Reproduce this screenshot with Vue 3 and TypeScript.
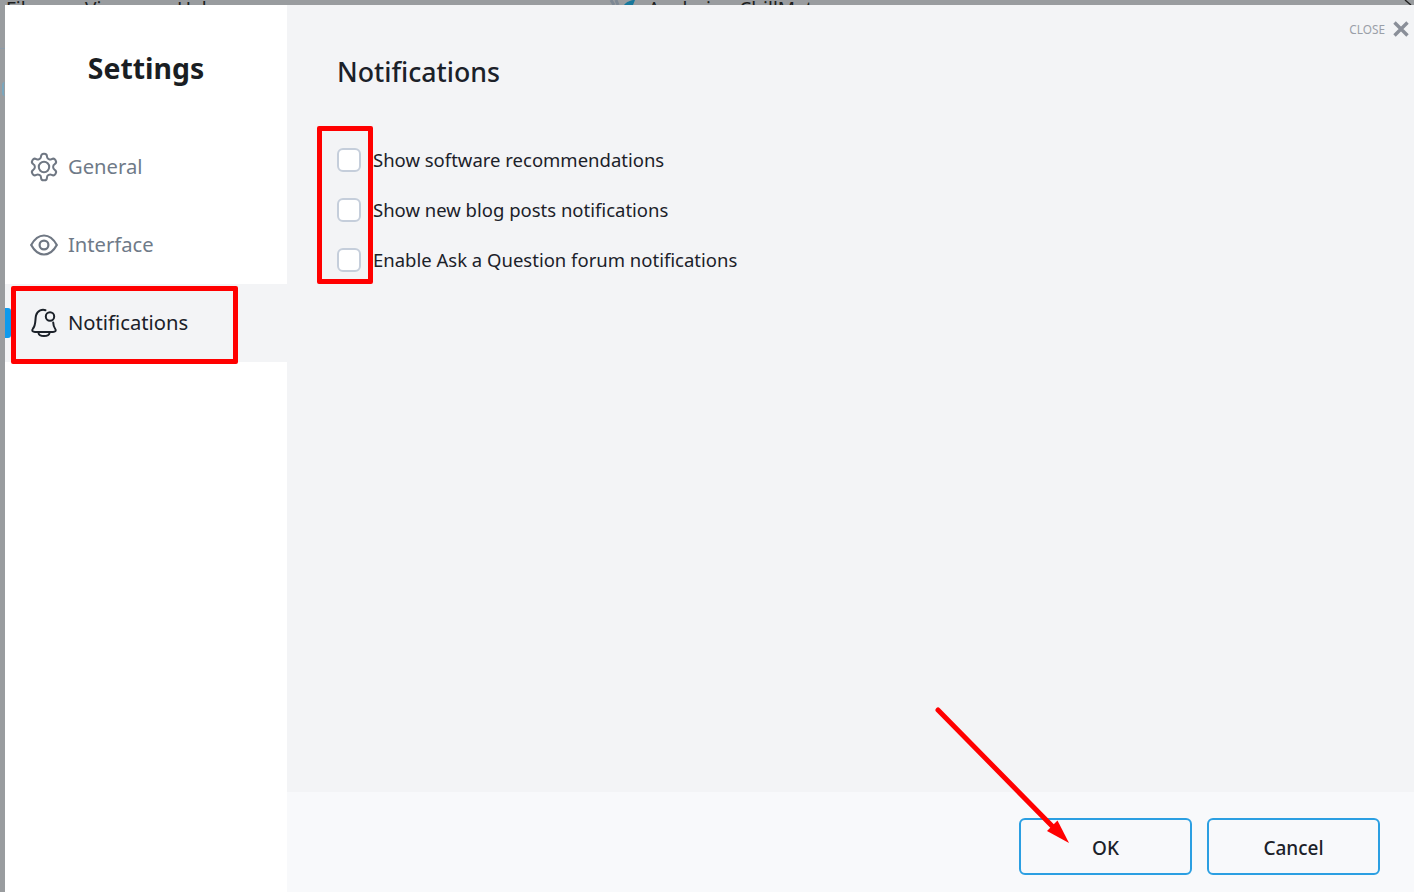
<script setup lang="ts">
import { ref } from "vue";

interface NavItem {
  label: string;
  icon: "gear" | "eye" | "bell";
  active?: boolean;
}

const navItems: NavItem[] = [
  { label: "General", icon: "gear" },
  { label: "Interface", icon: "eye" },
  { label: "Notifications", icon: "bell", active: true },
];

const options = ref([
  { label: "Show software recommendations", checked: false },
  { label: "Show new blog posts notifications", checked: false },
  { label: "Enable Ask a Question forum notifications", checked: false },
]);
</script>

<template>
  <div class="page">
    <div class="behind-top">
      <span class="menu m1">File</span>
      <span class="menu m2">View</span>
      <span class="menu m3">Help</span>
      <svg class="app-logo" width="28" height="5" viewBox="0 0 28 5">
        <path d="M2 0 L5 5 M7 0 L9 5" stroke="#7d8894" stroke-width="3" fill="none" />
        <path d="M15 5 C17 2 22 0 26 0 L24 5 Z" fill="#17789c" />
      </svg>
      <span class="menu m4">Analyzing ChillMat...</span>
      <svg class="win-x" width="12" height="5" viewBox="0 0 12 5">
        <path d="M3 0 L9 5" stroke="#222" stroke-width="1.4" />
      </svg>
    </div>

    <div class="body-row">
      <div class="behind-left">
        <div class="left-line"></div>
        <div class="left-arc"></div>
      </div>

      <div class="dialog">
        <aside class="sidebar">
          <h1 class="title">Settings</h1>
          <nav class="nav">
            <div v-for="item in navItems" :key="item.label" class="nav-item" :class="{ active: item.active }">
              <svg v-if="item.icon === 'gear'" class="nav-icon" viewBox="1.5 1.5 21 21" fill="none" stroke="currentColor" stroke-width="1.5">
                <path d="M12.22 2h-.44a2 2 0 0 0-2 2v.18a2 2 0 0 1-1 1.73l-.43.25a2 2 0 0 1-2 0l-.15-.08a2 2 0 0 0-2.73.73l-.22.38a2 2 0 0 0 .73 2.73l.15.1a2 2 0 0 1 1 1.72v.51a2 2 0 0 1-1 1.74l-.15.09a2 2 0 0 0-.73 2.73l.22.38a2 2 0 0 0 2.73.73l.15-.08a2 2 0 0 1 2 0l.43.25a2 2 0 0 1 1 1.73V20a2 2 0 0 0 2 2h.44a2 2 0 0 0 2-2v-.18a2 2 0 0 1 1-1.73l.43-.25a2 2 0 0 1 2 0l.15.08a2 2 0 0 0 2.73-.73l.22-.39a2 2 0 0 0-.73-2.73l-.15-.08a2 2 0 0 1-1-1.74v-.5a2 2 0 0 1 1-1.74l.15-.09a2 2 0 0 0 .73-2.73l-.22-.38a2 2 0 0 0-2.73-.73l-.15.08a2 2 0 0 1-2 0l-.43-.25a2 2 0 0 1-1-1.73V4a2 2 0 0 0-2-2z" />
                <circle cx="12" cy="12" r="3.9" />
              </svg>
              <svg v-else-if="item.icon === 'eye'" class="nav-icon" viewBox="0 0 28 28" fill="none" stroke="currentColor" stroke-width="2.2">
                <path d="M1.2 14 C5 7 9 4.5 14 4.5 C19 4.5 23 7 26.8 14 C23 21 19 23.5 14 23.5 C9 23.5 5 21 1.2 14 Z" />
                <circle cx="14" cy="14" r="4.4" />
              </svg>
              <svg v-else class="nav-icon" viewBox="0 0 28 32" fill="none" stroke="currentColor" stroke-width="2" stroke-linecap="round">
                <path d="M15.5 3.2 C12.5 2 7.5 3 6 8.5 C5 13 6 18 3 21.5 C1 24 3 25 5 25 L23 25 C25 25 27 24 25 21.5 C23.8 20 23.4 18.5 23.2 15.5" />
                <circle cx="20" cy="9.5" r="4.2" />
                <path d="M8.5 26 C9 30 19 30 19.5 26" />
              </svg>
              <span class="nav-label">{{ item.label }}</span>
            </div>
          </nav>
        </aside>

        <main class="content">
          <div class="content-top">
            <div class="close-row">
              <span class="close-text">CLOSE</span>
              <svg width="16" height="16" viewBox="0 0 16 16">
                <path d="M1.5 1.5 L14.5 14.5 M14.5 1.5 L1.5 14.5" stroke="#8a8f99" stroke-width="3.4" />
              </svg>
            </div>
            <h2 class="heading">Notifications</h2>
            <div class="options">
              <label v-for="opt in options" :key="opt.label" class="option">
                <span class="check"></span>
                <span class="option-label">{{ opt.label }}</span>
              </label>
            </div>
          </div>
          <footer class="footer">
            <button class="btn" type="button">OK</button>
            <button class="btn" type="button">Cancel</button>
          </footer>
        </main>
      </div>
    </div>

    <div class="mark mark-nav"></div>
    <div class="mark mark-checks"></div>
    <svg class="arrow" width="1414" height="892" viewBox="0 0 1414 892">
      <line x1="938" y1="710" x2="1056" y2="830" stroke="#ff0000" stroke-width="5" stroke-linecap="round" />
      <polygon points="1069,843 1047,831 1057.5,820.5" fill="#ff0000" />
    </svg>
  </div>
</template>

<style>
html,
body {
  margin: 0;
  padding: 0;
  background: #9a9da0;
}
</style>

<style scoped>
.page {
  position: relative;
  width: 1414px;
  height: 892px;
  overflow: hidden;
  display: flex;
  flex-direction: column;
  background: #999c9f;
  font-family: "Noto Sans", "Open Sans", sans-serif;
  color: #1b2129;
}

.behind-top {
  position: relative;
  height: 5px;
  flex: none;
  overflow: hidden;
}

.menu {
  position: absolute;
  top: -4px;
  font-size: 19px;
  line-height: 27px;
  color: #1d1f20;
  white-space: nowrap;
}

.m1 { left: 6px; }
.m2 { left: 85px; }
.m3 { left: 177px; }
.m4 { left: 648px; }

.app-logo {
  position: absolute;
  left: 609px;
  top: 0;
}

.win-x {
  position: absolute;
  left: 1402px;
  top: 0;
}

.body-row {
  flex: 1;
  display: flex;
  min-height: 0;
}

.behind-left {
  position: relative;
  width: 5px;
  flex: none;
}

.left-line {
  position: absolute;
  top: 43px;
  left: 0;
  width: 5px;
  height: 1px;
  background: #8b9cab;
}

.left-arc {
  position: absolute;
  top: 77px;
  left: 2px;
  width: 3px;
  height: 14px;
  border-left: 2px solid #7aa6bd;
  border-radius: 3px 0 0 3px;
  box-sizing: border-box;
}

.dialog {
  flex: 1;
  display: flex;
  min-width: 0;
}

.sidebar {
  width: 282px;
  flex: none;
  background: #ffffff;
}

.title {
  margin: 0;
  height: 123px;
  padding-top: 44px;
  box-sizing: border-box;
  text-align: center;
  font-size: 28.4px;
  line-height: 38px;
  font-weight: 700;
  color: #1a1e23;
}

.nav {
  display: flex;
  flex-direction: column;
}

.nav-item {
  position: relative;
  height: 78px;
  display: flex;
  align-items: center;
  gap: 10px;
  padding-left: 25px;
  color: #6f7a88;
}

.nav-item.active {
  background: #f3f4f6;
  color: #1b2129;
}

.nav-item.active::before {
  content: "";
  position: absolute;
  left: 0;
  top: 24px;
  width: 6px;
  height: 30px;
  border-radius: 0 3px 3px 0;
  background: #0f9aec;
}

.nav-icon {
  width: 28px;
  height: 28px;
  flex: none;
  overflow: visible;
  color: #6f7783;
}

.active .nav-icon {
  height: 32px;
  color: #1b2129;
}

.nav-label {
  font-size: 20.2px;
  line-height: 28px;
  margin-top: -2px;
}

.content {
  flex: 1;
  min-width: 0;
  display: flex;
  flex-direction: column;
  background: #f3f4f6;
}

.content-top {
  position: relative;
  flex: 1;
  padding: 47px 0 0 50px;
}

.close-row {
  position: absolute;
  top: 16px;
  right: 5px;
  display: flex;
  align-items: center;
  gap: 8px;
}

.close-text {
  font-size: 11.8px;
  line-height: 16px;
  color: #9a9fa8;
}

.heading {
  margin: 0;
  font-size: 26.7px;
  line-height: 40px;
  font-weight: 500;
  color: #1b2129;
}

.options {
  margin-top: 54px;
  display: flex;
  flex-direction: column;
  gap: 22px;
}

.option {
  display: flex;
  align-items: center;
  height: 28px;
}

.check {
  width: 24px;
  height: 24px;
  box-sizing: border-box;
  flex: none;
  border: 2px solid #c5cedb;
  border-radius: 6px;
  background: #ffffff;
  margin-right: 12px;
}

.option-label {
  font-size: 18.5px;
  line-height: 28px;
  color: #1b2129;
  white-space: nowrap;
}

.footer {
  height: 100px;
  flex: none;
  box-sizing: border-box;
  background: #f8f9fb;
  display: flex;
  justify-content: flex-end;
  gap: 15px;
  padding: 26px 34px 0 0;
}

.btn {
  width: 173px;
  height: 57px;
  box-sizing: border-box;
  border: 2px solid #2b9fe2;
  border-radius: 6px;
  background: transparent;
  font-family: inherit;
  font-size: 19px;
  font-weight: 500;
  color: #1b2129;
  padding: 2px 0 0;
}

.mark {
  position: absolute;
  box-sizing: border-box;
  border: 5px solid #ff0000;
  border-radius: 2px;
  pointer-events: none;
}

.mark-nav {
  left: 11px;
  top: 286px;
  width: 227px;
  height: 78px;
}

.mark-checks {
  left: 317px;
  top: 126px;
  width: 56px;
  height: 158px;
}

.arrow {
  position: absolute;
  left: 0;
  top: 0;
  pointer-events: none;
}
</style>
